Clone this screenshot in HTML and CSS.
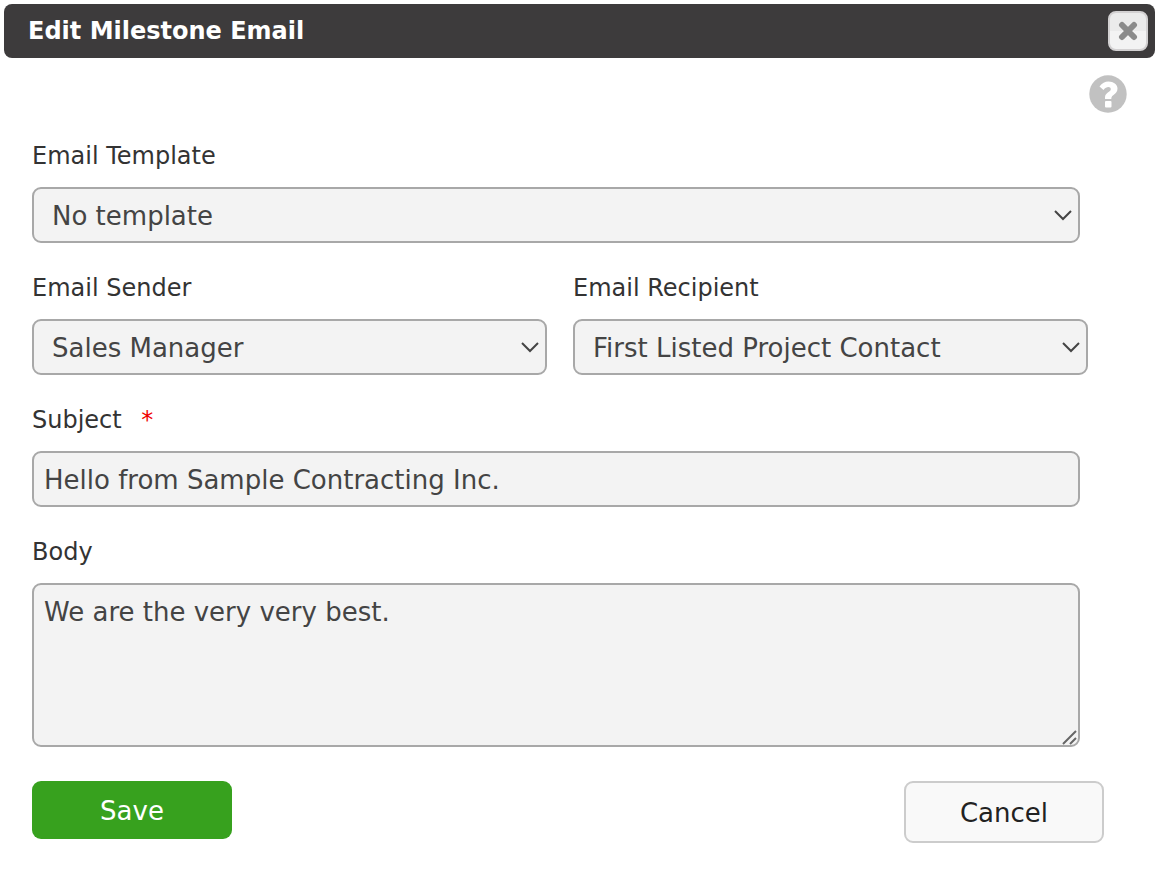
FILE: index.html
```html
<!DOCTYPE html>
<html lang="en">
<head>
  <meta charset="UTF-8" />
  <meta name="viewport" content="width=device-width, initial-scale=1.0" />
  <title>Edit Milestone Email</title>
  <link rel="stylesheet" href="styles.css">
</head>
<body>
  <main class="dialog">
    <!-- Title bar -->
    <header class="dialog-header">
      <h1>Edit Milestone Email</h1>
      <button type="button" class="close-btn" aria-label="Close">
        <svg width="20" height="20" viewBox="0 0 20 20" aria-hidden="true">
          <path d="M4 4L16 16M16 4L4 16" />
        </svg>
      </button>
    </header>

    <div class="help-row">
      <a class="help-link" href="#help" aria-label="Help">
        <svg width="38" height="38" viewBox="0 0 38 38" aria-hidden="true">
          <circle cx="19" cy="19" r="18.7" fill="#c1c1c1" />
          <path d="M10.500 11.500C13 8 16 6.500 19.500 6.500C24.500 6.500 28.500 9.500 28.500 13.500C28.500 19.500 22.300 19.500 22.300 23.500V24H16V22.500C16 17.500 21.800 17 21.800 14.200C21.800 11.500 17.500 11 14.500 15Z" fill="#fff" />
          <rect x="16" y="26" width="6.500" height="6.500" rx="1" fill="#fff" />
        </svg>
      </a>
    </div>

    <form class="email-form" action="#" method="post">
      <div class="field">
        <label for="template">Email Template</label>
        <div class="control">
          <select id="template" name="template">
            <option>No template</option>
          </select>
          <svg class="chevron" width="18" height="12" viewBox="0 0 18 12" aria-hidden="true"><path d="M1 2L9 10L17 2" /></svg>
        </div>
      </div>

      <!-- Sender and recipient side by side -->
      <div class="field-row">
        <div class="field">
          <label for="sender">Email Sender</label>
          <div class="control">
            <select id="sender" name="sender">
              <option>Sales Manager</option>
            </select>
            <svg class="chevron" width="18" height="12" viewBox="0 0 18 12" aria-hidden="true"><path d="M1 2L9 10L17 2" /></svg>
          </div>
        </div>
        <div class="field">
          <label for="recipient">Email Recipient</label>
          <div class="control">
            <select id="recipient" name="recipient">
              <option>First Listed Project Contact</option>
            </select>
            <svg class="chevron" width="18" height="12" viewBox="0 0 18 12" aria-hidden="true"><path d="M1 2L9 10L17 2" /></svg>
          </div>
        </div>
      </div>

      <div class="field">
        <label for="subject">Subject <span class="required">*</span></label>
        <input type="text" id="subject" name="subject" value="Hello from Sample Contracting Inc." required />
      </div>

      <div class="field">
        <label for="body">Body</label>
        <div class="control">
          <textarea id="body" name="body">We are the very very best.</textarea>
          <svg class="grip" width="16" height="16" viewBox="0 0 16 16" aria-hidden="true"><path d="M1 15L14 2M8 15L14 9" /></svg>
        </div>
      </div>

      <div class="actions">
        <button type="submit" class="btn btn-save">Save</button>
        <button type="button" class="btn btn-cancel">Cancel</button>
      </div>
    </form>
  </main>
</body>
</html>
```
FILE: styles.css
```css
*, *::before, *::after {
  box-sizing: border-box;
}

body {
  margin: 4px 3px 4px 4px;
  background: #fff;
  color: #333;
  font-family: Verdana, "DejaVu Sans", sans-serif;
  font-size: 24px;
}

/* Title bar */
.dialog-header {
  display: flex;
  justify-content: space-between;
  align-items: center;
  height: 54px;
  padding: 0 7px 0 24px;
  background: #3d3b3c;
  border-radius: 8px;
}
.dialog-header h1 {
  margin: 0;
  color: #fff;
  font-size: 24px;
  line-height: 56px;
}
.close-btn {
  display: flex;
  justify-content: center;
  align-items: center;
  width: 40px;
  height: 40px;
  padding: 0;
  background: linear-gradient(#ebebeb 50%, #f3f3f3 50%);
  border: 2px solid #d3d1d2;
  border-radius: 8px;
  cursor: pointer;
}
.close-btn path {
  stroke: #8b8b8b;
  stroke-width: 6;
  stroke-linecap: round;
}

/* Help icon */
.help-row {
  display: flex;
  justify-content: flex-end;
  padding: 17px 28px 0 0;
}
.help-link,
.help-link svg {
  display: block;
}

.email-form {
  display: flex;
  flex-direction: column;
  gap: 30px;
  padding: 28px 51px 40px 28px;
}
.field {
  display: flex;
  flex-direction: column;
  gap: 16px;
  margin-right: 24px;
}
.field-row {
  display: grid;
  grid-template-columns: 1fr 1fr;
  gap: 26px;
  margin-right: 16px;
}
.field-row .field {
  margin-right: 0;
}
label {
  line-height: 30px;
}
.required {
  margin-left: 12px;
  color: #f00000;
}

/* Inputs share the same box */
.control {
  position: relative;
}
select,
input,
textarea {
  display: block;
  width: 100%;
  height: 56px;
  margin: 0;
  padding: 2px 10px 0;
  background: #f3f3f3;
  border: 2px solid #a8a8a8;
  border-radius: 9px;
  color: #444;
  font-family: inherit;
  font-size: 26px;
}
select {
  appearance: none;
  padding: 2px 36px 0 18px;
}
textarea {
  height: 164px;
  padding: 11px 10px;
  line-height: 32px;
  resize: vertical;
}
textarea::-webkit-resizer {
  display: none;
}
.chevron,
.grip {
  position: absolute;
  fill: none;
  stroke: #444;
  stroke-width: 2;
  pointer-events: none;
}
.chevron {
  top: 22px;
  right: 8px;
}
.grip {
  right: 2px;
  bottom: 2px;
  stroke: #666;
}

/* Save / Cancel */
.actions {
  display: flex;
  justify-content: space-between;
  align-items: flex-start;
  padding-top: 4px;
}
.btn {
  width: 200px;
  height: 58px;
  padding: 2px 0 0;
  border: 0;
  border-radius: 9px;
  font-family: inherit;
  font-size: 26px;
  cursor: pointer;
}
.btn-save {
  background: #37a11e;
  color: #fff;
}
.btn-cancel {
  height: 62px;
  background: #f9f9f9;
  border: 2px solid #ccc;
  color: #222;
}
```
